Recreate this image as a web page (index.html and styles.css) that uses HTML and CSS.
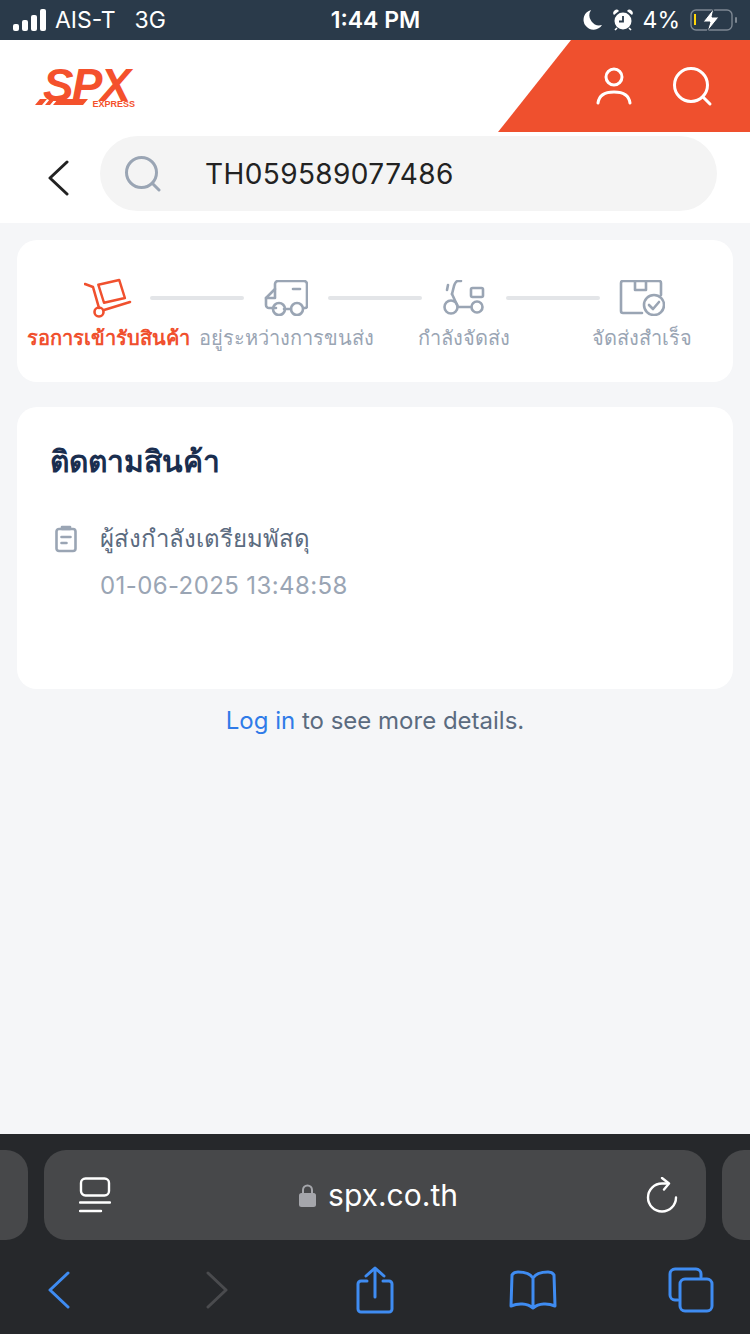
FILE: index.html
```html
<!DOCTYPE html>
<html lang="th">
<head>
  <meta charset="UTF-8">
  <meta name="viewport" content="width=device-width, initial-scale=1.0">
  <title>SPX Express</title>
  <link rel="stylesheet" href="styles.css">
</head>
<body>
  <div class="phone">
    <div class="status-bar">
      <div class="status-left">
        <svg class="signal" width="34" height="22" viewBox="0 0 34 22" fill="#fff">
          <rect x="0" y="15" width="6" height="7" rx="2"/>
          <rect x="9" y="11" width="6" height="11" rx="2"/>
          <rect x="18" y="6" width="6" height="16" rx="2"/>
          <rect x="27" y="0" width="6" height="22" rx="2"/>
        </svg>
        <span class="carrier">AIS-T</span>
        <span class="network">3G</span>
      </div>
      <div class="status-time">1:44 PM</div>
      <div class="status-right">
        <svg width="20" height="22" viewBox="0 0 20 22"><path d="M8 1a10 10 0 0 0 11 15A10 10 0 1 1 8 1z" fill="#fff"/></svg>
        <svg class="alarm" width="20" height="22" viewBox="0 0 20 22">
          <circle cx="10" cy="12" r="8.5" fill="#fff"/>
          <path d="M10 7v5.5H6" stroke="#2a3a4a" stroke-width="1.8" fill="none"/>
          <path d="M1 6a3 3 0 0 1 5-4zM19 6a3 3 0 0 0-5-4z" fill="#fff"/>
          <path d="M4 19l-2 2M16 19l2 2" stroke="#fff" stroke-width="1.6"/>
        </svg>
        <span class="battery-pct">4%</span>
        <svg class="battery" width="48" height="24" viewBox="0 0 48 24">
          <rect x="1" y="2" width="41" height="20" rx="5" fill="none" stroke="#7d8792" stroke-width="1.4"/>
          <rect x="45" y="9" width="2" height="6" rx="1" fill="#7d8792"/>
          <rect x="4" y="6" width="2" height="11" fill="#ffd60a"/>
          <path d="M24 0L13 14h7l-3 10 12-15h-7z" fill="#fff" stroke="#2a3a4a" stroke-width="1"/>
        </svg>
      </div>
    </div>

    <header class="site-header">
      <div class="logo">
        <span class="logo-word">SPX</span>
        <svg class="logo-stripes" width="66" height="8" viewBox="0 0 66 8" fill="#f4512c">
          <path d="M5 0h7l-5 6H0zM15 0h5l-5 6H10zM23 0h30l-5 6H18z"/>
        </svg>
        <span class="logo-sub">EXPRESS</span>
      </div>
      <div class="header-actions">
        <svg width="36" height="38" viewBox="0 0 36 38" fill="none" stroke="#fff" stroke-width="3" stroke-linecap="round">
          <circle cx="18" cy="10" r="8"/>
          <path d="M2 36c1-8 8-11 16-11s15 3 16 11"/>
        </svg>
        <svg width="40" height="40" viewBox="0 0 40 40" fill="none" stroke="#fff" stroke-width="3" stroke-linecap="round">
          <circle cx="18" cy="18" r="16.5"/>
          <path d="M30 30l7 7"/>
        </svg>
      </div>
    </header>

    <div class="search-row">
      <svg class="search-back" width="22" height="36" viewBox="0 0 22 36" fill="none" stroke="#222" stroke-width="3" stroke-linecap="round" stroke-linejoin="round">
        <path d="M19 2L2 18l17 16"/>
      </svg>
      <div class="search-pill">
        <svg width="36" height="36" viewBox="0 0 36 36" fill="none" stroke="#9aa5b4" stroke-width="3" stroke-linecap="round">
          <circle cx="16.500" cy="16.500" r="15"/>
          <path d="M28 28l6 6"/>
        </svg>
        <span class="search-text">TH059589077486</span>
      </div>
    </div>

    <main class="content">
      <section class="card steps-card">
        <div class="step-track">
          <div class="step-icon">
            <svg width="48" height="40" viewBox="0 0 48 40" fill="none" stroke="#f0502e" stroke-width="2.600" stroke-linecap="round" stroke-linejoin="round">
              <path d="M1 6l8 3 6 21"/>
              <circle cx="15" cy="34" r="4.500"/>
              <path d="M20 32l26-8"/>
              <path d="M14 6l22-5 6 19-22 5z" transform="translate(1 1) scale(.95)"/>
            </svg>
          </div>
          <div class="step-line"></div>
          <div class="step-icon">
            <svg width="44" height="36" viewBox="0 0 44 36" fill="none" stroke="#9aa5b4" stroke-width="2.600" stroke-linecap="round" stroke-linejoin="round">
              <path d="M12 28H5a3 3 0 0 1-3-3V18l9-9V4a3 3 0 0 1 3-3h26a3 3 0 0 1 3 3v22a2 2 0 0 1-2 2h-1"/>
              <path d="M27 29h-7M2 18h9V9"/>
              <circle cx="15" cy="29" r="6"/>
              <circle cx="33" cy="29" r="6"/>
              <path d="M29 9h7"/>
            </svg>
          </div>
          <div class="step-line"></div>
          <div class="step-icon">
            <svg width="42" height="36" viewBox="0 0 42 36" fill="none" stroke="#9aa5b4" stroke-width="2.600" stroke-linecap="round" stroke-linejoin="round">
              <path d="M18 1h-3c-2 0-3 2-4 5l-2 8"/>
              <path d="M5 5l-1 5"/>
              <circle cx="8" cy="27" r="6.500"/>
              <circle cx="34" cy="27" r="5.500"/>
              <path d="M9 14l6 13h13"/>
              <rect x="28" y="8" width="12" height="9" rx="1.500"/>
            </svg>
          </div>
          <div class="step-line"></div>
          <div class="step-icon">
            <svg width="46" height="36" viewBox="0 0 46 36" fill="none" stroke="#9aa5b4" stroke-width="2.600" stroke-linecap="round" stroke-linejoin="round">
              <path d="M23 33H4a2 2 0 0 1-2-2V3a2 2 0 0 1 2-2h36a2 2 0 0 1 2 2v12"/>
              <path d="M16 1v9h11V1"/>
              <circle cx="35" cy="25" r="10"/>
              <path d="M30 25l4 4 6-7"/>
            </svg>
          </div>
        </div>
        <div class="step-labels">
          <span class="step-label is-active">รอการเข้ารับสินค้า</span>
          <span class="step-label">อยู่ระหว่างการขนส่ง</span>
          <span class="step-label">กำลังจัดส่ง</span>
          <span class="step-label">จัดส่งสำเร็จ</span>
        </div>
      </section>

      <section class="card track-card">
        <h2 class="track-title">ติดตามสินค้า</h2>
        <div class="track-item">
          <svg class="track-icon" width="22" height="28" viewBox="0 0 22 28" fill="none" stroke="#9aa5b4" stroke-width="2.600" stroke-linecap="round" stroke-linejoin="round">
            <rect x="1.500" y="4" width="19" height="22" rx="2.500"/>
            <path d="M7 4V2h8v2z" fill="#9aa5b4"/>
            <path d="M6.500 12h9M6.500 18h5"/>
          </svg>
          <div class="track-body">
            <div class="track-text">ผู้ส่งกำลังเตรียมพัสดุ</div>
            <div class="track-date">01-06-2025 13:48:58</div>
          </div>
        </div>
      </section>

      <p class="login-hint"><a class="login-link" href="#">Log in</a> to see more details.</p>
    </main>

    <div class="browser-bar">
      <div class="url-row">
        <div class="url-side"></div>
        <div class="url-pill">
          <svg width="32" height="36" viewBox="0 0 32 36" fill="none" stroke="#fff" stroke-width="2.400" stroke-linecap="round">
            <rect x="2" y="1.500" width="28" height="17" rx="4.500"/>
            <path d="M1 25.500h30M1 34h21"/>
          </svg>
          <div class="url-text">
            <svg width="17" height="24" viewBox="0 0 17 24">
              <path d="M4 11V7a4.500 4.500 0 0 1 9 0v4" fill="none" stroke="#a5a6ab" stroke-width="2"/>
              <rect x="0" y="10" width="17" height="14" rx="2.500" fill="#a5a6ab"/>
            </svg>
            <span>spx.co.th</span>
          </div>
          <svg width="32" height="36" viewBox="0 0 32 36" fill="none" stroke="#fff" stroke-width="2.400" stroke-linecap="round" stroke-linejoin="round">
            <path d="M30 20.500A14 14 0 1 1 16 6.500h6"/>
            <path d="M16 1l7 5.500-5 6"/>
          </svg>
        </div>
        <div class="url-side"></div>
      </div>
      <nav class="toolbar">
        <svg width="22" height="38" viewBox="0 0 22 38" fill="none" stroke="#3f8cf2" stroke-width="3" stroke-linecap="round" stroke-linejoin="round"><path d="M20 2L2 19l18 17"/></svg>
        <svg width="22" height="38" viewBox="0 0 22 38" fill="none" stroke="#4a4b4e" stroke-width="3" stroke-linecap="round" stroke-linejoin="round"><path d="M2 2l18 17L2 36"/></svg>
        <svg width="38" height="48" viewBox="0 0 38 48" fill="none" stroke="#3f8cf2" stroke-width="3" stroke-linecap="round" stroke-linejoin="round">
          <path d="M11 15H5a3 3 0 0 0-3 3v25a3 3 0 0 0 3 3h28a3 3 0 0 0 3-3V18a3 3 0 0 0-3-3h-6"/>
          <path d="M19 31V2M10 10l9-8 9 8"/>
        </svg>
        <svg width="48" height="40" viewBox="0 0 48 40" fill="none" stroke="#3f8cf2" stroke-width="3" stroke-linecap="round" stroke-linejoin="round">
          <path d="M24 8C21 3 15 2 9 2c-3 0-5 1-6 3L2 36c7-3 16-3 22 2 6-5 15-5 22-2L45 5c-1-2-3-3-6-3-6 0-12 1-15 6zM24 8v30"/>
        </svg>
        <svg width="46" height="46" viewBox="0 0 46 46" fill="none" stroke="#3f8cf2" stroke-width="3" stroke-linecap="round" stroke-linejoin="round">
          <path d="M10 33H7a5 5 0 0 1-5-5V7a5 5 0 0 1 5-5h21a5 5 0 0 1 5 5v3"/>
          <rect x="12" y="12" width="32" height="32" rx="5"/>
        </svg>
      </nav>
    </div>
  </div>
</body>
</html>
```

FILE: styles.css
```css
* {
  box-sizing: border-box;
}
html, body {
  margin: 0;
  padding: 0;
}
body {
  font-family: Inter, "Noto Sans", "Liberation Sans", sans-serif;
  background-color: #f5f6f8;
}
.phone {
  display: flex;
  flex-direction: column;
  width: 750px;
  height: 1334px;
  overflow: hidden;
}
svg {
  display: block;
  flex: none;
}

/* status bar */
.status-bar {
  display: grid;
  grid-template-columns: 1fr auto 1fr;
  align-items: center;
  height: 40px;
  padding: 0 12px 0 13px;
  background-color: #2a3a4a;
  color: #fff;
  font-size: 23px;
}
.status-left {
  display: flex;
  align-items: center;
}
.carrier {
  margin-left: 8px;
}
.network {
  margin-left: 19px;
}
.status-time {
  font-weight: 600;
}
.status-right {
  display: flex;
  align-items: center;
  justify-content: flex-end;
  gap: 10px;
}

/* header */
.site-header {
  display: flex;
  justify-content: space-between;
  height: 92px;
  background-color: #fff;
}
.logo {
  position: relative;
  width: 105px;
  height: 50px;
  margin: 22px 0 0 35px;
}
.logo-word {
  position: absolute;
  left: 8px;
  top: -4px;
  font-family: "Liberation Sans", sans-serif;
  font-size: 46px;
  font-weight: 700;
  font-style: italic;
  letter-spacing: -2px;
  color: #f4512c;
}
.logo-stripes {
  position: absolute;
  left: 0;
  bottom: 5px;
}
.logo-sub {
  position: absolute;
  right: 5px;
  bottom: 3px;
  font-family: "Liberation Sans", sans-serif;
  font-size: 9px;
  font-weight: 700;
  color: #f4512c;
}
.header-actions {
  display: flex;
  align-items: flex-start;
  gap: 41px;
  width: 252px;
  height: 92px;
  padding: 27px 37px 0 0;
  justify-content: flex-end;
  background-color: #ef502e;
  clip-path: polygon(73px 0, 100% 0, 100% 100%, 0 100%);
}

/* search */
.search-row {
  display: flex;
  align-items: center;
  height: 91px;
  padding: 0 33px 0 48px;
  background-color: #fff;
}
.search-pill {
  display: flex;
  align-items: center;
  flex: 1;
  height: 75px;
  margin: -8px 0 0 30px;
  padding-left: 25px;
  border-radius: 38px;
  background-color: #f4f4f4;
}
.search-text {
  margin-left: 44px;
  font-size: 28px;
  letter-spacing: 0.4px;
  color: #222;
}

/* content */
.content {
  flex: 1;
  padding: 17px 17px 0;
}
.card {
  border-radius: 20px;
  background-color: #fff;
}
.steps-card {
  height: 142px;
  padding: 36px 2px 0;
}
.step-track {
  display: flex;
  align-items: center;
  height: 44px;
  padding-left: 47px;
}
.step-icon {
  display: flex;
  justify-content: center;
  width: 84px;
}
.step-line {
  width: 94px;
  height: 4px;
  border-radius: 2px;
  background-color: #e3e5e8;
}
.step-labels {
  display: grid;
  grid-template-columns: repeat(4, 178px);
  margin-top: 3px;
}
.step-label {
  font-size: 20px;
  line-height: 30px;
  text-align: center;
  white-space: nowrap;
  color: #9aa5b4;
}
.step-label.is-active {
  font-weight: 600;
  color: #f0502e;
}
.track-card {
  height: 282px;
  margin-top: 25px;
  padding: 30px 33px 0;
}
.track-title {
  margin: 0;
  font-size: 30px;
  line-height: 48px;
  font-weight: 700;
  color: #1a2e4f;
}
.track-item {
  display: flex;
  margin-top: 34px;
}
.track-icon {
  margin: 6px 0 0 5px;
}
.track-body {
  margin-left: 23px;
}
.track-text {
  font-size: 24px;
  line-height: 40px;
  color: #5b6b7f;
}
.track-date {
  margin-top: 8px;
  font-size: 24px;
  line-height: 38px;
  letter-spacing: 0.4px;
  color: #9aa5b4;
}
.login-hint {
  margin: 17px 0 0;
  font-size: 24px;
  line-height: 30px;
  text-align: center;
  color: #5b6b7f;
}
.login-link {
  color: #2f7be8;
  text-decoration: none;
}

/* safari bar */
.browser-bar {
  height: 200px;
  padding-top: 16px;
  background-color: #26282b;
}
.url-row {
  display: flex;
  gap: 16px;
  height: 90px;
  margin: 0 -44px;
}
.url-side {
  flex: 0 0 72px;
  border-radius: 22px;
  background-color: #47484a;
}
.url-pill {
  display: flex;
  align-items: center;
  justify-content: space-between;
  flex: 1;
  padding: 0 28px 0 35px;
  border-radius: 22px;
  background-color: #47484a;
}
.url-text {
  display: flex;
  align-items: center;
  gap: 12px;
  font-size: 30px;
  color: #fff;
}
.toolbar {
  display: grid;
  grid-template-columns: repeat(5, 158px);
  justify-content: center;
  justify-items: center;
  align-items: center;
  height: 100px;
}
```
